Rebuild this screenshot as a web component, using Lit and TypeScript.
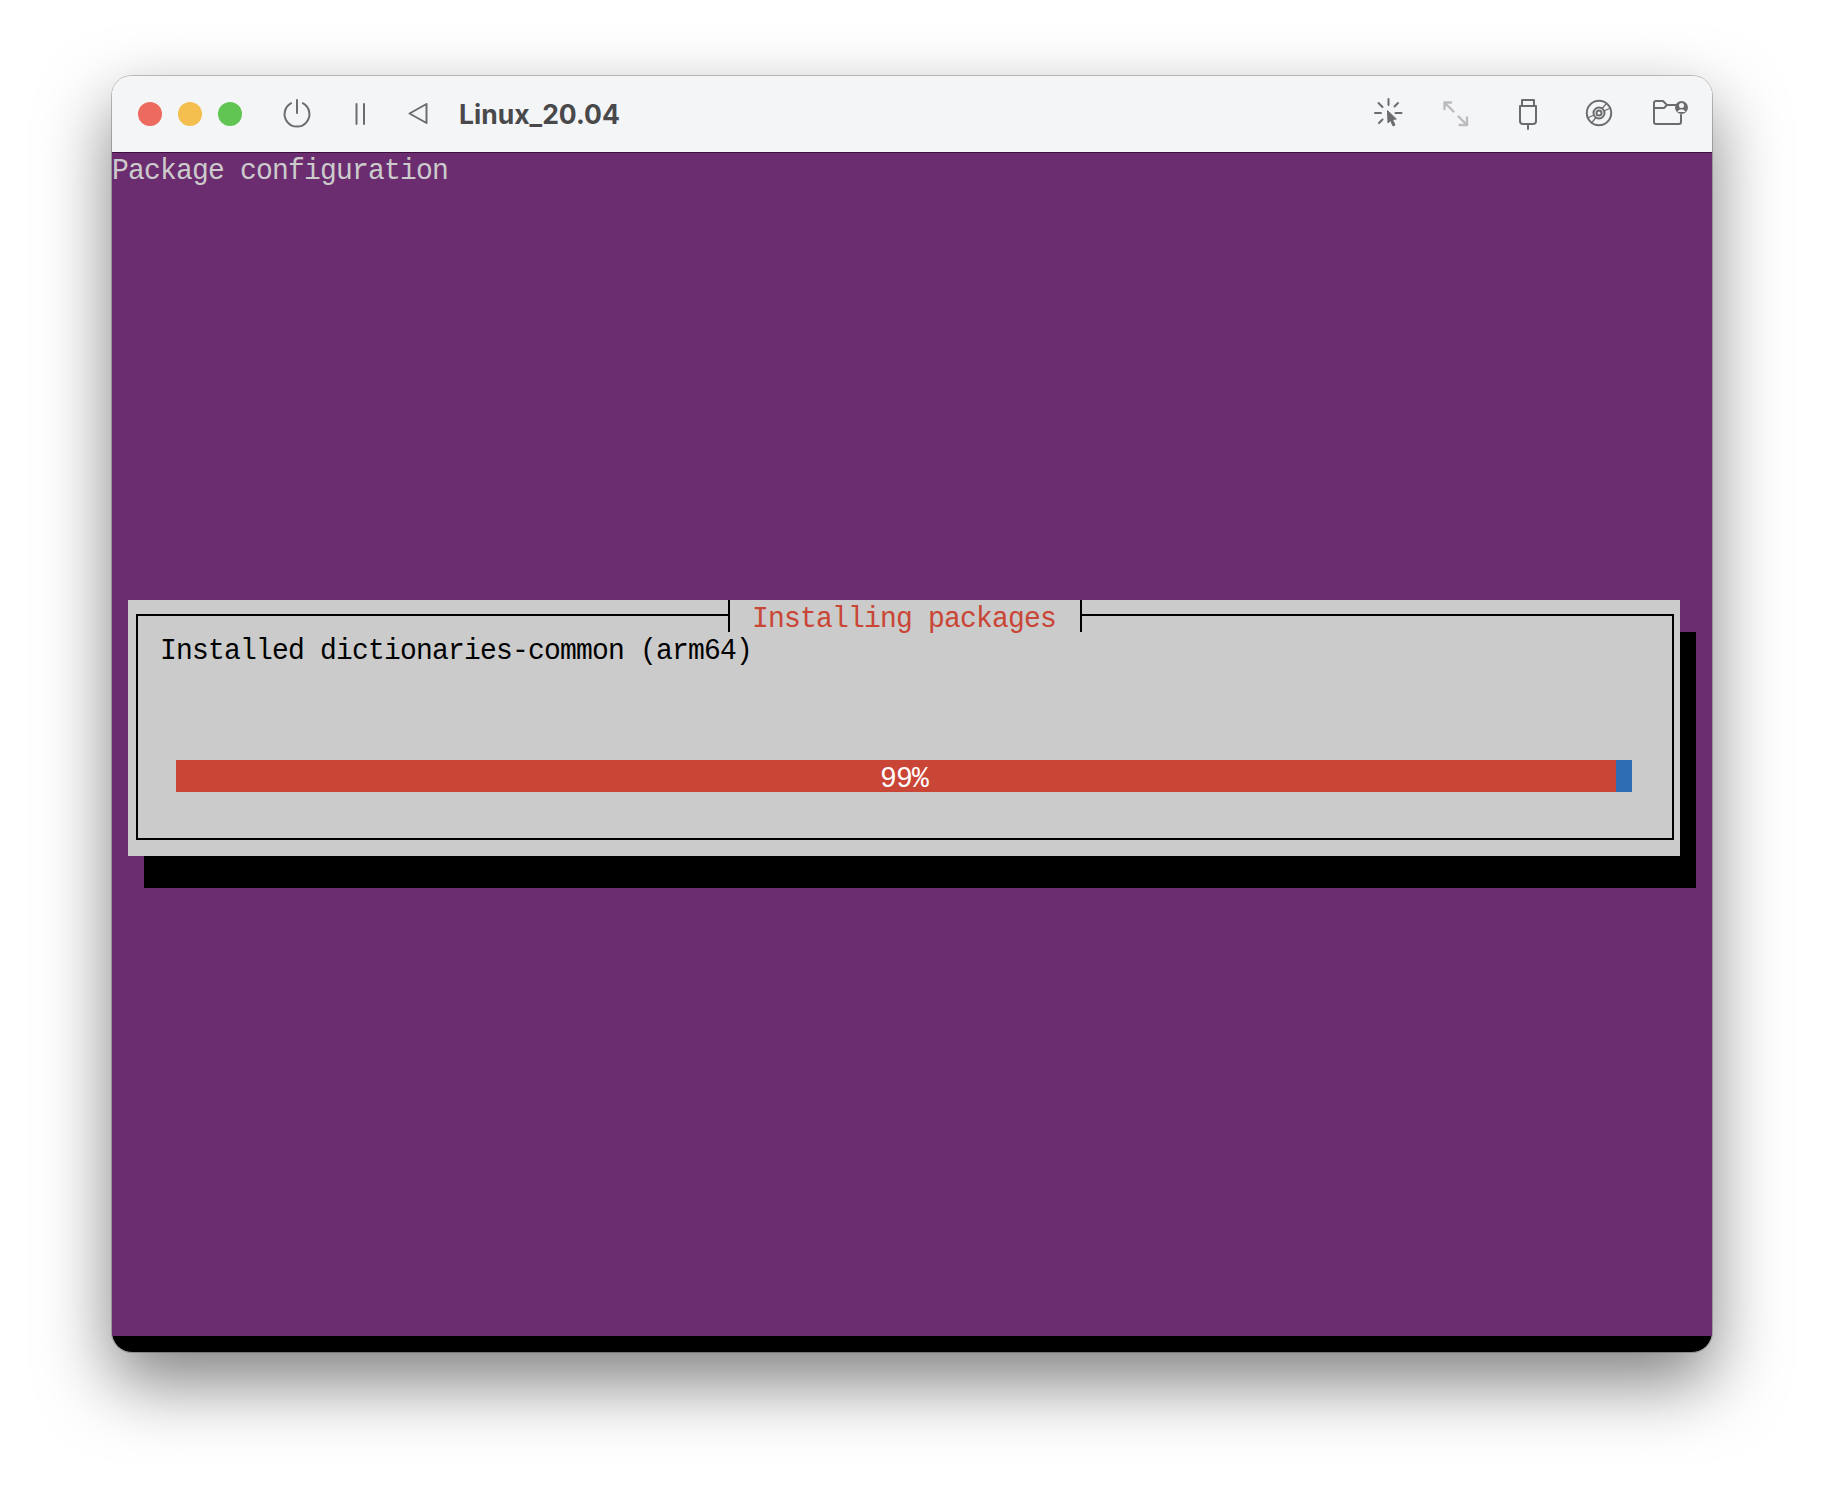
import { LitElement, html, css } from "lit";
import { customElement } from "lit/decorators.js";

@customElement("app-root")
export class AppRoot extends LitElement {
  static styles = css`
    :host { display: block; height: 1500px; background: #fff; overflow: hidden; }
    .page { padding: 76px 0 0 112px; }
    .window {
      position: relative; width: 1600px; height: 1276px; border-radius: 20px; overflow: hidden; background: #f4f5f7;
    }
    .shadow {
      position: absolute; left: 112px; top: 76px; width: 1600px; height: 1276px; border-radius: 20px;
      box-shadow: 0 30px 70px rgba(0,0,0,.5), 0 0 0 1px rgba(0,0,0,.22);
    }
    .titlebar { position: relative; height: 76px; display: flex; align-items: center; padding-left: 26px; box-sizing: border-box; background: #f4f5f7; }
    .dot { width: 24px; height: 24px; border-radius: 50%; margin-right: 16px; box-sizing: border-box; }
    .red { background: #ec6a5e; }
    .yellow { background: #f5bf4f; }
    .green { background: #61c554; }
    svg { width: 36px; height: 36px; flex: none; fill: none; stroke: #6c6c6f; stroke-width: 2; stroke-linecap: round; stroke-linejoin: round; }
    .power { margin-left: 21px; }
    .pause { margin-left: 27px; }
    .back { margin-left: 22px; }
    .name { margin-left: 23px; font: 700 26.5px/1 Inter, "Liberation Sans", sans-serif; color: #49494b; }
    .right { margin-left: auto; display: flex; align-items: center; padding-right: 24px; }
    .right svg + svg { margin-left: 35px; }
    .right .usb { margin-left: 36px; }
    .right .full { stroke: #bcbcbc; stroke-width: 2.4; margin-left: 31.5px !important; }
    .terminal { position: relative; height: 1200px; background: #000; }
    .screen {
      height: 1184px; background: #6c2d70; box-shadow: inset 0 1px 0 #3c0f40;
      display: flex; flex-direction: column; align-items: flex-start;
    }
    .row {
      height: 32px; font: 400 28px/32px "Liberation Mono", monospace; letter-spacing: -0.8px; white-space: pre; color: #cbcbcb;
      transform: translateY(3px) scaleY(1.08);
    }
    .dialog {
      position: relative; margin: 416px 0 0 16px; width: 1552px; height: 256px; background: #cbcbcb;
      box-shadow: 16px 32px 0 #000; padding: 14px 6px 16px 8px; box-sizing: border-box;
    }
    .box { position: relative; height: 226px; border: 2px solid #000; box-sizing: border-box; padding: 16px 22px 0; background: #cbcbcb; }
    .box .row { color: #000; }
    .title {
      position: absolute; left: 590px; top: -16px; width: 354px; height: 32px; box-sizing: border-box;
      background: #cbcbcb; border-left: 2px solid #000; border-right: 2px solid #000; padding-left: 22px;
    }
    .title .row { color: #c94535; }
    .bar { display: flex; margin: 96px 0 0 16px; width: 1456px; height: 32px; }
    .fill { position: relative; width: 1440px; background: #c94535; }
    .rest { width: 16px; background: #2e6db4; }
    .pct { position: absolute; left: 704px; top: 0; }
    .pct.row { color: #fff; }
  `;

  render() {
    return html`
      <div class="shadow"></div>
      <div class="page">
        <div class="window">
          <div class="titlebar">
            <div class="dot red"></div><div class="dot yellow"></div><div class="dot green"></div>
            <svg class="power" viewBox="0 0 36 36"><path d="M12.2 7.2A12.4 12.4 0 1 0 23.8 7.2M18 4v13"/></svg>
            <svg class="pause" viewBox="0 0 36 36"><path d="M14.5 8V28M22 8V28"/></svg>
            <svg class="back" viewBox="0 0 36 36"><path d="M26.5 8L9.5 17.5 26.5 27Z"/></svg>
            <span class="name">Linux_20.04</span>
            <div class="right">
              <svg viewBox="0 0 36 36">
                <path d="M17.500 3V9M4 17H10M24.500 17H30.500M7.500 7L11.500 11M27 7L23.500 10.500M8 27L11.500 23.500"/>
                <path d="M16.500 15L17 27 19.500 24.500 22 30 24 29 21.500 23.500 25 23Z" fill="#6c6c6f" stroke-width="1"/>
              </svg>
              <svg class="full" viewBox="0 0 36 36"><path d="M6.500 13V6.500H13M7 7L15.500 15.500M20.500 20.500L29 29M29 21.500V29H21.500"/></svg>
              <svg class="usb" viewBox="0 0 36 36"><path d="M12 10V4H24V10M10 10H26V25A3 3 0 0 1 23 28H13A3 3 0 0 1 10 25ZM18 28V33"/></svg>
              <svg viewBox="0 0 36 36">
                <circle cx="18" cy="17" r="12.200"/><circle cx="18" cy="17" r="5.500"/><circle cx="18" cy="17" r="2.500"/>
                <path stroke-width="1.200" d="M21 12.500L25.500 7.500M23 15L29.500 12M15 21.500L10.500 27M13 19L6.500 22"/>
              </svg>
              <svg viewBox="0 0 36 36">
                <path d="M2 12V7A2 2 0 0 1 4 5H11L15 9H24M2 12H12L15 9M2 12V26A2 2 0 0 0 4 28H27A2 2 0 0 0 29 26V19"/>
                <circle cx="29.500" cy="11.500" r="6.500" fill="#6c6c6f" stroke="none"/>
                <circle cx="29.500" cy="9.500" r="2.500" fill="#f4f5f7" stroke="none"/>
                <path d="M25.500 16A4.200 3.800 0 0 1 33.500 16Z" fill="#f4f5f7" stroke="none"/>
              </svg>
            </div>
          </div>
          <div class="terminal">
            <div class="screen">
              <div class="row">Package configuration</div>
              <div class="dialog">
                <div class="box">
                  <div class="title"><div class="row">Installing packages</div></div>
                  <div class="row">Installed dictionaries-common (arm64)</div>
                  <div class="bar">
                    <div class="fill"><div class="pct row">99%</div></div>
                    <div class="rest"></div>
                  </div>
                </div>
              </div>
            </div>
          </div>
        </div>
      </div>
    `;
  }
}
